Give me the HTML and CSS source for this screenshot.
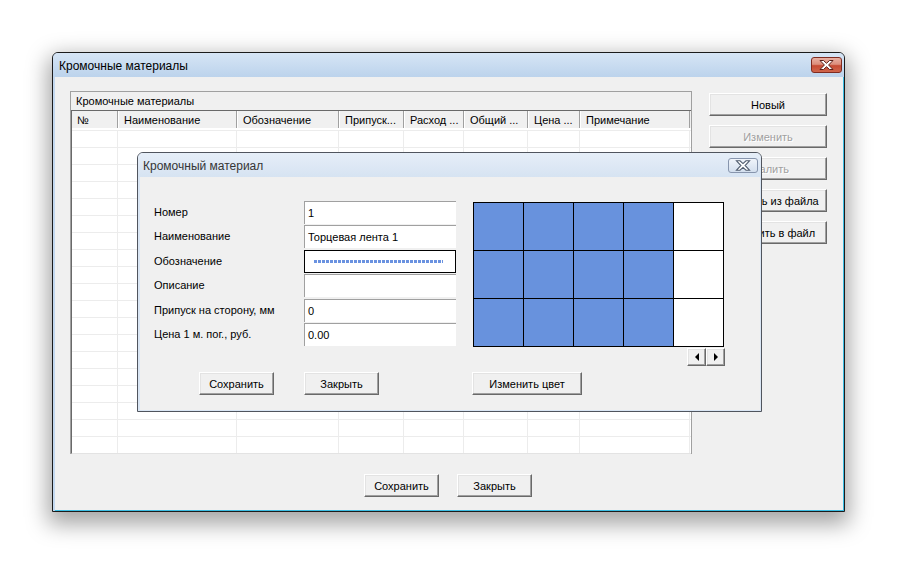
FILE: index.html
```html
<!DOCTYPE html>
<html lang="ru">
<head>
<meta charset="utf-8">
<title>Кромочные материалы</title>
<link rel="stylesheet" href="styles.css">
</head>
<body>
<div class="desktop">
  <section class="win main-win">
    <header class="titlebar">
      <span class="title">Кромочные материалы</span>
      <span class="close close-red"><svg width="29" height="14" viewBox="0 0 29 14"><path d="M8 2.5 H11.5 L14.5 5.3 L17.5 2.5 H21 L16.6 7 L21 11.5 H17.5 L14.5 8.7 L11.5 11.5 H8 L12.4 7 Z"/></svg></span>
    </header>
    <div class="client main-client">
      <div class="main-top">
        <div class="table">
          <div class="caption">Кромочные материалы</div>
          <div class="list">
            <div class="cols head">
              <div class="hc">№</div>
              <div class="hc">Наименование</div>
              <div class="hc">Обозначение</div>
              <div class="hc">Припуск...</div>
              <div class="hc">Расход ...</div>
              <div class="hc">Общий ...</div>
              <div class="hc">Цена ...</div>
              <div class="hc">Примечание</div>
            </div>
            <div class="cols body">
              <div class="bc"></div><div class="bc"></div><div class="bc"></div><div class="bc"></div>
              <div class="bc"></div><div class="bc"></div><div class="bc"></div><div class="bc"></div>
            </div>
          </div>
        </div>
        <div class="side">
          <button class="btn">Новый</button>
          <button class="btn disabled">Изменить</button>
          <button class="btn disabled">Удалить</button>
          <button class="btn">Загрузить из файла</button>
          <button class="btn">Сохранить в файл</button>
        </div>
      </div>
      <div class="main-bottom">
        <button class="btn w75">Сохранить</button>
        <button class="btn w75">Закрыть</button>
      </div>
    </div>
  </section>

  <section class="win dlg">
    <header class="titlebar">
      <span class="title">Кромочный материал</span>
      <span class="close close-grey"><svg width="28" height="13" viewBox="0 0 28 13"><path d="M7.5 1.8 H11 L14 4.6 L17 1.8 H20.5 L16.1 6.5 L20.5 11.2 H17 L14 8.4 L11 11.2 H7.5 L11.9 6.5 Z"/></svg></span>
    </header>
    <div class="client dlg-client">
      <div class="dlg-row">
        <div class="form">
          <label>Номер</label><div class="field">1</div>
          <label>Наименование</label><div class="field">Торцевая лента 1</div>
          <label>Обозначение</label><div class="field focus"><span class="dashes"></span></div>
          <label>Описание</label><div class="field"></div>
          <label>Припуск на сторону, мм</label><div class="field">0</div>
          <label>Цена 1 м. пог., руб.</label><div class="field">0.00</div>
        </div>
        <div class="palette">
          <div class="swatches">
            <div class="sw"></div><div class="sw"></div><div class="sw"></div><div class="sw"></div><div class="sw white"></div>
            <div class="sw"></div><div class="sw"></div><div class="sw"></div><div class="sw"></div><div class="sw white"></div>
            <div class="sw"></div><div class="sw"></div><div class="sw"></div><div class="sw"></div><div class="sw white"></div>
          </div>
          <div class="scroll">
            <button class="btn sbtn"><span class="tri tri-left"></span></button>
            <button class="btn sbtn"><span class="tri tri-right"></span></button>
          </div>
        </div>
      </div>
      <div class="dlg-buttons">
        <button class="btn w75 b-save">Сохранить</button>
        <button class="btn w75 b-close">Закрыть</button>
        <button class="btn b-color">Изменить цвет</button>
      </div>
    </div>
  </section>
</div>
</body>
</html>
```

FILE: styles.css
```css
* { box-sizing: border-box; }
html, body { margin: 0; padding: 0; }
body {
  width: 898px;
  height: 564px;
  overflow: hidden;
  background: #fff;
  font: 11px "Liberation Sans", Arial, sans-serif;
  color: #000;
}
.desktop { position: relative; width: 898px; height: 564px; }

.win { position: absolute; display: flex; flex-direction: column; }

.titlebar {
  flex: none;
  display: flex;
  justify-content: space-between;
  align-items: flex-start;
  margin-left: -2px;
  height: 24px;
}
.title { font-size: 12px; line-height: 16px; white-space: nowrap; }

.close {
  display: flex;
  align-items: center;
  justify-content: center;
  border: 1px solid;
  border-radius: 3px;
}
.close svg { display: block; }
.close-red {
  width: 31px;
  height: 16px;
  background: linear-gradient(#e9b0a3 0%, #dc8e7c 45%, #c64a33 55%, #d0664d 100%);
  border-color: #7f2b20;
}
.close-red path { fill: #fff; stroke: #5a1f18; stroke-width: 1; }
.close-grey {
  width: 30px;
  height: 15px;
  background: linear-gradient(#f0f4fa, #d3dfee);
  border-color: #8795ad;
}
.close-grey path { fill: #fff; stroke: #4f5b6e; stroke-width: 1.1; }

.client { flex: 1; background: #f0f0f0; }

/* main window */
.main-win {
  left: 52px;
  top: 52px;
  width: 793px;
  height: 460px;
  border: 1px solid #1b1b1b;
  border-radius: 6px 6px 0 0;
  background: #c3d8ef;
  padding-left: 2px;
  box-shadow: 0 8px 22px 4px rgba(0, 0, 0, 0.36);
}
.main-win .titlebar {
  padding: 4px 2px 0 6px;
  background: linear-gradient(#d6e5f5, #bcd3ec);
  border-radius: 5px 5px 0 0;
}
.main-win .title { padding-top: 1px; }
.main-client {
  border-right: 1px solid #3bbde3;
  border-bottom: 1px solid #3bbde3;
  padding: 14px 17px 0 15px;
  display: flex;
  flex-direction: column;
}
.main-top { display: flex; gap: 17px; }

.table {
  flex: none;
  width: 622px;
  height: 363px;
  border-top: 1px solid #a0a0a0;
  border-left: 1px solid #a0a0a0;
  border-right: 1px solid #a0a0a0;
  background: #f0f0f0;
  display: flex;
  flex-direction: column;
}
.caption { height: 18px; line-height: 18px; padding-left: 5px; }
.list {
  flex: 1;
  display: flex;
  flex-direction: column;
  border-top: 1px solid #696969;
  border-left: 1px solid #696969;
  border-bottom: 1px solid #e3e3e3;
  background: #fff;
}
.cols {
  display: grid;
  grid-template-columns: 46px 119px 102px 65px 60px 64px 52px 110px;
}
.head { height: 17px; background: #f0f0f0; }
.hc {
  line-height: 18px;
  padding-left: 6px;
  border-right: 1px solid #a0a0a0;
  box-shadow: inset 1px 0 0 #fff;
  white-space: nowrap;
  overflow: hidden;
}
.hc:first-child { padding-left: 5px; box-shadow: none; }
.body {
  flex: 1;
  margin-top: 2px;
  background: repeating-linear-gradient(to bottom, #ececec 0 1px, #fff 1px 17px);
}
.bc { border-right: 1px solid #ececec; }

.side { flex: none; display: flex; flex-direction: column; gap: 9px; padding-top: 2px; width: 118px; }
.side .btn { height: 23px; }

.main-bottom { display: flex; justify-content: center; gap: 18px; margin-top: 20px; }

/* buttons */
.btn {
  display: flex;
  align-items: center;
  justify-content: center;
  padding: 0;
  margin: 0;
  font: inherit;
  color: #000;
  background: #f0f0f0;
  border: 1px solid;
  border-color: #fff #696969 #696969 #fff;
  box-shadow: inset -1px -1px 0 #a0a0a0, inset 1px 1px 0 #e3e3e3;
  white-space: nowrap;
  overflow: hidden;
}
.btn.disabled { color: #a0a0a0; text-shadow: 1px 1px 0 #fff; }
.w75 { width: 75px; height: 23px; }

/* dialog */
.dlg {
  left: 137px;
  top: 152px;
  width: 625px;
  height: 260px;
  border: 1px solid #50555e;
  border-radius: 6px 6px 0 0;
  background: #dae6f4;
  padding-left: 2px;
}
.dlg .titlebar {
  padding: 5px 3px 0 5px;
  background: linear-gradient(#e6eef8, #d6e3f2);
  border-radius: 5px 5px 0 0;
}
.dlg .title { color: #353535; }
.dlg-client {
  border-right: 1px solid #dae6f4;
  border-bottom: 1px solid #dae6f4;
  padding: 24px 0 0 14px;
}
.dlg-row { display: flex; gap: 17px; align-items: flex-start; }
.form {
  display: grid;
  grid-template-columns: 150px 152px;
  grid-auto-rows: 24.4px;
  align-items: start;
}
.form label { line-height: 23px; white-space: nowrap; }
.field {
  height: 23px;
  background: #fff;
  border-top: 1px solid #a0a0a0;
  border-left: 1px solid #a0a0a0;
  padding-left: 3px;
  line-height: 22px;
  white-space: nowrap;
}
.field.focus {
  border: 1px solid #000;
  display: flex;
  align-items: center;
  padding-left: 9px;
}
.dashes {
  display: block;
  width: 129px;
  height: 3px;
  background: repeating-linear-gradient(90deg, #6a92e0 0 3px, transparent 3px 4px);
}

.palette { margin-top: 1px; display: flex; flex-direction: column; align-items: flex-end; }
.swatches {
  display: grid;
  grid-template-columns: repeat(5, 49px);
  grid-auto-rows: 47px;
  gap: 1px;
  background: #000;
  border: 1px solid #000;
}
.sw { background: #6892dd; }
.sw.white { background: #fff; }
.scroll { display: flex; margin-top: 1px; margin-right: -1px; }
.sbtn { width: 19px; height: 18px; }
.tri { display: block; width: 0; height: 0; border-top: 4px solid transparent; border-bottom: 4px solid transparent; }
.tri-left { border-right: 4px solid #000; }
.tri-right { border-left: 4px solid #000; }

.dlg-buttons { display: flex; margin-top: 6px; }
.b-save { margin-left: 45px; }
.b-close { margin-left: 30px; }
.b-color { margin-left: 93px; width: 110px; height: 23px; }
```
